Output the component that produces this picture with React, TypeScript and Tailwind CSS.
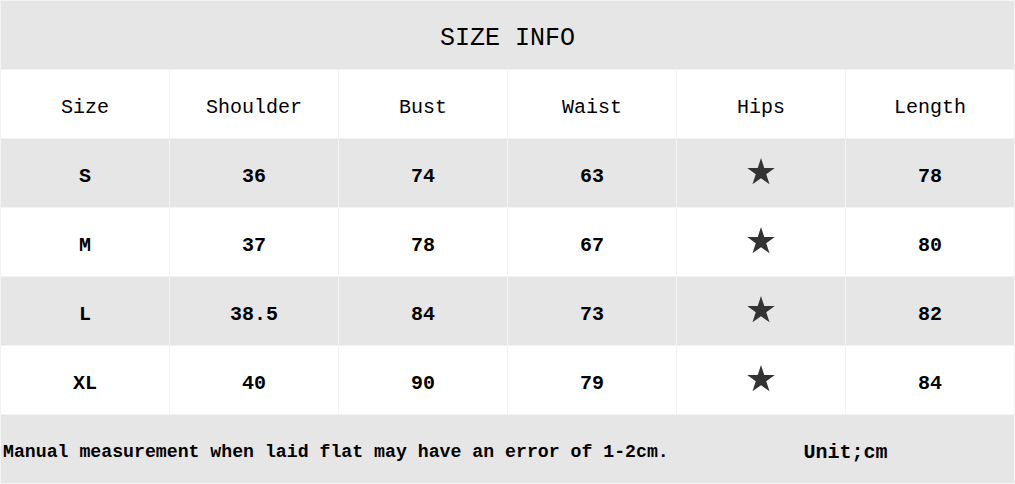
import React from "react";

const rows = [
  { size: "S", shoulder: "36", bust: "74", waist: "63", length: "78" },
  { size: "M", shoulder: "37", bust: "78", waist: "67", length: "80" },
  { size: "L", shoulder: "38.5", bust: "84", waist: "73", length: "82" },
  { size: "XL", shoulder: "40", bust: "90", waist: "79", length: "84" },
];

const headers = ["Size", "Shoulder", "Bust", "Waist", "Hips", "Length"];

function Star() {
  return (
    <svg width="28" height="27" viewBox="0 0 24 23" className="-mt-3">
      <polygon
        points="12,0 14.8,8.5 23.8,8.5 16.5,13.8 19.3,22.5 12,17.2 4.7,22.5 7.5,13.8 0.2,8.5 9.2,8.5"
        fill="#333333"
      />
    </svg>
  );
}

export default function App() {
  return (
    <div
      className="w-[1015px] h-[484px] bg-[#f3f3f3] p-px grid grid-cols-6 grid-rows-7 gap-px text-black"
      style={{ fontFamily: '"Liberation Mono", "Noto Sans CJK SC", monospace' }}
    >
      {/* Title */}
      <div className="col-span-6 bg-[#e6e6e6] flex items-center justify-center pt-2 text-[25px]">
        SIZE INFO
      </div>

      {/* Header */}
      {headers.map((h) => (
        <div key={h} className="bg-white flex items-center justify-center pt-2 text-[20px]">
          {h}
        </div>
      ))}

      {/* Data rows */}
      {rows.map((r, i) => {
        const bg = i % 2 === 0 ? "bg-[#e6e6e6]" : "bg-white";
        const cell = `${bg} flex items-center justify-center pt-2 text-[20px] font-bold`;
        return (
          <React.Fragment key={r.size}>
            <div className={cell}>{r.size}</div>
            <div className={cell}>{r.shoulder}</div>
            <div className={cell}>{r.bust}</div>
            <div className={cell}>{r.waist}</div>
            <div className={cell}>
              <Star />
            </div>
            <div className={cell}>{r.length}</div>
          </React.Fragment>
        );
      })}

      {/* Footer */}
      <div className="col-span-6 bg-[#e6e6e6] flex items-center pt-2 font-bold whitespace-nowrap">
        <span className="w-[676px] pl-[2px] text-[18.2px]">
          Manual measurement when laid flat may have an error of 1-2cm.
        </span>
        <span className="flex-1 text-center text-[20px]">Unit;cm</span>
      </div>
    </div>
  );
}
